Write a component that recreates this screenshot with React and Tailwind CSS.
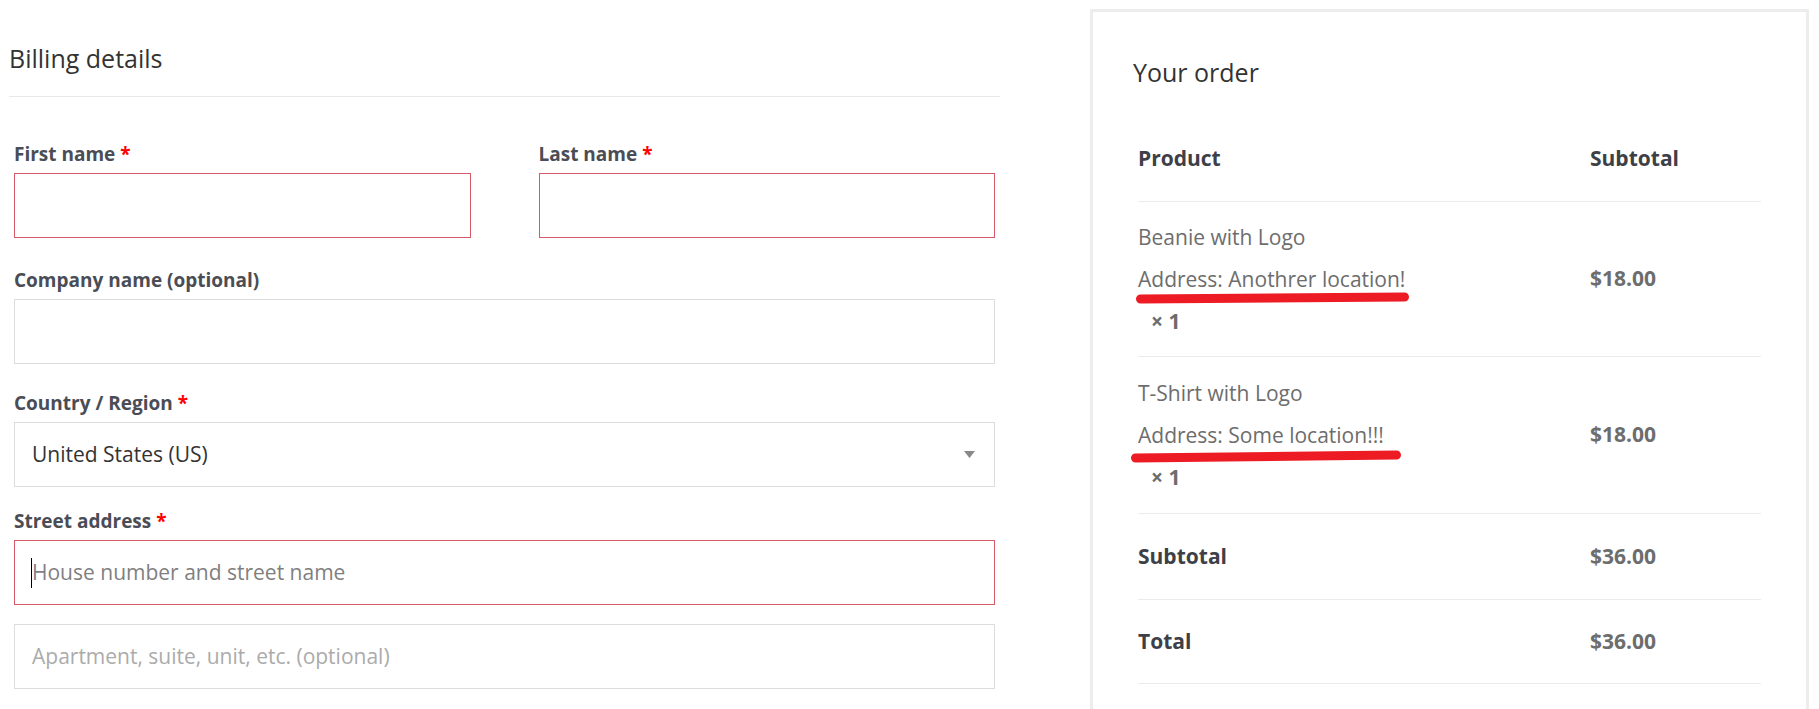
import React from 'react';

const font = { fontFamily: '"Open Sans", "Noto Sans", Arial, sans-serif' };

function Label({ children, required }) {
  return (
    <label className="block h-[30px] leading-[30px] mb-[4px] text-[19px] font-bold text-[#4a4d55]">
      {children}
      {required && <span className="text-[#f00] ml-[5px]">*</span>}
    </label>
  );
}

function Field({ error, children }) {
  return (
    <div
      className={
        'h-[65px] border bg-white flex items-center pl-[17px] pr-[16px] text-[21px] ' +
        (error ? 'border-[#d75a68]' : 'border-[#dcdcdc]')
      }
    >
      {children}
    </div>
  );
}

function Underline({ d }) {
  return (
    <svg className="absolute left-[-10px] top-[30px] pointer-events-none" width="300" height="24" viewBox="0 0 300 24">
      <path d={d} stroke="#ed1c24" strokeWidth="9" strokeLinecap="round" fill="none" />
    </svg>
  );
}

function ItemRow({ name, address, price, line, height }) {
  return (
    <div className={'flex items-center border-b border-[#ebebeb] ' + height}>
      <div className="w-[452px] text-[21px] text-[#6d6d6d]">
        <div className="h-[42px] leading-[42px]">{name}</div>
        <div className="relative h-[42px] leading-[42px]">
          {address}
          <Underline d={line} />
        </div>
        <div className="h-[42px] leading-[42px] pl-[13px] font-bold">× 1</div>
      </div>
      <div className="text-[21px] font-bold text-[#6d6d6d]">{price}</div>
    </div>
  );
}

function TotalRow({ label, value, height }) {
  return (
    <div className={'flex items-center border-b border-[#ebebeb] text-[21px] font-bold ' + height}>
      <div className="w-[452px] text-[#3e4047]">{label}</div>
      <div className="text-[#6d6d6d]">{value}</div>
    </div>
  );
}

export default function App() {
  return (
    <div className="w-[1819px] h-[709px] overflow-hidden bg-white flex" style={font}>
      <div className="ml-[9px] w-[991px]">
        <div className="pt-[40px] pb-[20px] border-b border-[#e8e8e8]">
          <h3 className="text-[25px] leading-[36px] font-normal text-[#333]">Billing details</h3>
        </div>
        <div className="px-[5px] pt-[42px]">
          <div className="grid grid-cols-2 gap-x-[68px] mb-[27px]">
            <div>
              <Label required>First name</Label>
              <Field error />
            </div>
            <div>
              <Label required>Last name</Label>
              <Field error />
            </div>
          </div>
          <div className="mb-[24px]">
            <Label>Company name (optional)</Label>
            <Field />
          </div>
          <div className="mb-[19px]">
            <Label required>Country / Region</Label>
            <Field>
              <span className="text-[#333] flex-1">United States (US)</span>
              <svg width="11" height="7" viewBox="0 0 11 7" className="mr-[3px]">
                <path d="M0 0 H11 L5.5 7 Z" fill="#888" />
              </svg>
            </Field>
          </div>
          <div className="mb-[19px]">
            <Label required>Street address</Label>
            <Field error>
              <span className="w-px h-[30px] bg-black -ml-[1px]" />
              <span className="text-[#7f7f7f]">House number and street name</span>
            </Field>
          </div>
          <Field>
            <span className="text-[#ababab]">Apartment, suite, unit, etc. (optional)</span>
          </Field>
        </div>
      </div>

      <div className="ml-auto mr-[10px] mt-[9px] w-[719px] h-[760px] border-[3px] border-[#ededed] px-[45px]">
        <div className="pt-[42px]">
          <h3 className="-ml-[5px] text-[25px] leading-[36px] font-normal text-[#333]">Your order</h3>
        </div>
        <div className="mt-[27px]">
          <div className="flex items-center h-[85px] border-b border-[#ebebeb] text-[21px] font-bold text-[#3e4047]">
            <div className="w-[452px]">Product</div>
            <div>Subtotal</div>
          </div>
          <ItemRow
            name="Beanie with Logo"
            address="Address: Anothrer location!"
            price="$18.00"
            line="M12.5 11 Q140 9.5 276.5 9"
            height="h-[155px]"
          />
          <ItemRow
            name="T-Shirt with Logo"
            address="Address: Some location!!!"
            price="$18.00"
            line="M7.5 14 Q140 12 268.5 11"
            height="h-[157px]"
          />
          <TotalRow label="Subtotal" value="$36.00" height="h-[86px]" />
          <TotalRow label="Total" value="$36.00" height="h-[84px]" />
        </div>
      </div>
    </div>
  );
}
